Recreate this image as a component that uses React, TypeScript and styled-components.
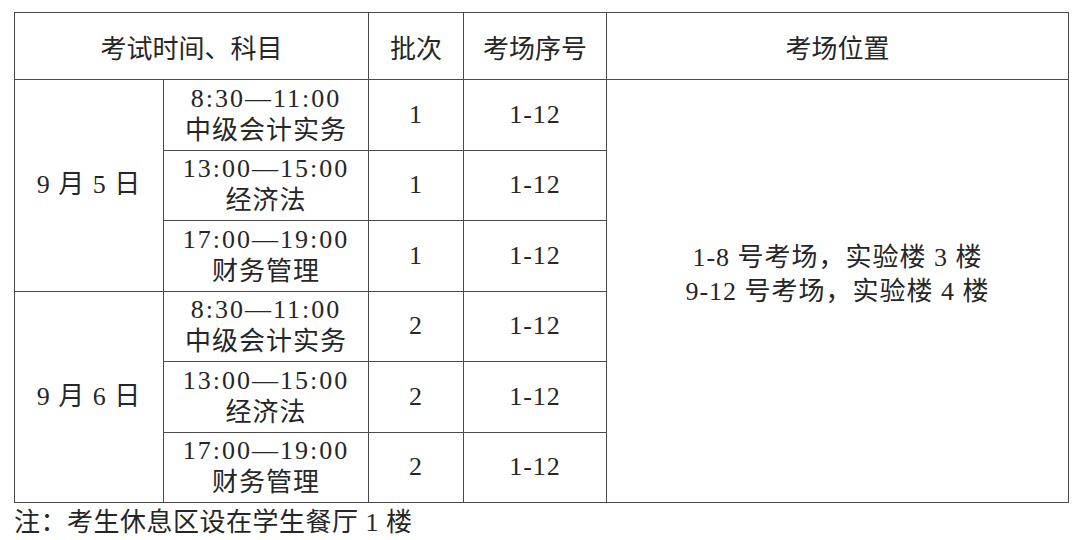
import React from "react";
import styled, { createGlobalStyle } from "styled-components";

const Global = createGlobalStyle`
  html, body { margin: 0; padding: 0; background: #fff; }
  body { width: 1080px; height: 540px; overflow: hidden; }
`;

const Page = styled.div`
  padding: 12px 0 0 14px;
  color: #262626;
`;

const Table = styled.table`
  border-collapse: collapse;
  table-layout: fixed;
  width: 1054px;
  font-family: "Liberation Serif", "Noto Sans CJK SC", serif;
  font-size: 26px;
`;

const HeadCell = styled.th`
  height: 66px;
  border: 1.5px solid #4a4a4a;
  font-family: "Noto Sans CJK SC", sans-serif;
  font-weight: 400;
  font-size: 26px;
  text-align: center;
  vertical-align: middle;
  padding: 0;
`;

const Cell = styled.td<{ $padBottom?: number }>`
  height: 69.5px;
  border: 1.5px solid #4a4a4a;
  text-align: center;
  vertical-align: middle;
  padding: 0 0 ${(p) => p.$padBottom ?? 0}px 0;
  line-height: 32px;
  letter-spacing: 1px;
`;

const Line = styled.div<{ $lh?: number; $wide?: boolean }>`
  line-height: ${(p) => p.$lh ?? 32}px;
  letter-spacing: ${(p) => (p.$wide ? 2 : 1)}px;
  white-space: nowrap;
`;

const Note = styled.div`
  font-family: "Liberation Serif", "Noto Sans CJK SC", serif;
  font-size: 26px;
  letter-spacing: 0.5px;
  line-height: 32px;
  margin-top: 4px;
`;

type Slot = { time: string; subject: string };
const slots: Slot[] = [
  { time: "8:30—11:00", subject: "中级会计实务" },
  { time: "13:00—15:00", subject: "经济法" },
  { time: "17:00—19:00", subject: "财务管理" },
];

const days = [
  { date: "9 月 5 日", batch: "1" },
  { date: "9 月 6 日", batch: "2" },
];

export default function App() {
  return (
    <>
      <Global />
      <Page>
        <Table>
          <colgroup>
            <col style={{ width: 149 }} />
            <col style={{ width: 205 }} />
            <col style={{ width: 95 }} />
            <col style={{ width: 143 }} />
            <col style={{ width: 462 }} />
          </colgroup>
          <thead>
            <tr>
              <HeadCell colSpan={2}>考试时间、科目</HeadCell>
              <HeadCell>批次</HeadCell>
              <HeadCell>考场序号</HeadCell>
              <HeadCell>考场位置</HeadCell>
            </tr>
          </thead>
          <tbody>
            {days.map((d, di) =>
              slots.map((s, si) => (
                <tr key={`${di}-${si}`}>
                  {si === 0 && <Cell rowSpan={3}>{d.date}</Cell>}
                  <Cell>
                    <Line $wide>{s.time}</Line>
                    <Line>{s.subject}</Line>
                  </Cell>
                  <Cell>{d.batch}</Cell>
                  <Cell>1-12</Cell>
                  {di === 0 && si === 0 && (
                    <Cell rowSpan={6} $padBottom={32}>
                      <Line $lh={34}>1-8 号考场，实验楼 3 楼</Line>
                      <Line $lh={34}>9-12 号考场，实验楼 4 楼</Line>
                    </Cell>
                  )}
                </tr>
              ))
            )}
          </tbody>
        </Table>
        <Note>注：考生休息区设在学生餐厅 1 楼</Note>
      </Page>
    </>
  );
}
